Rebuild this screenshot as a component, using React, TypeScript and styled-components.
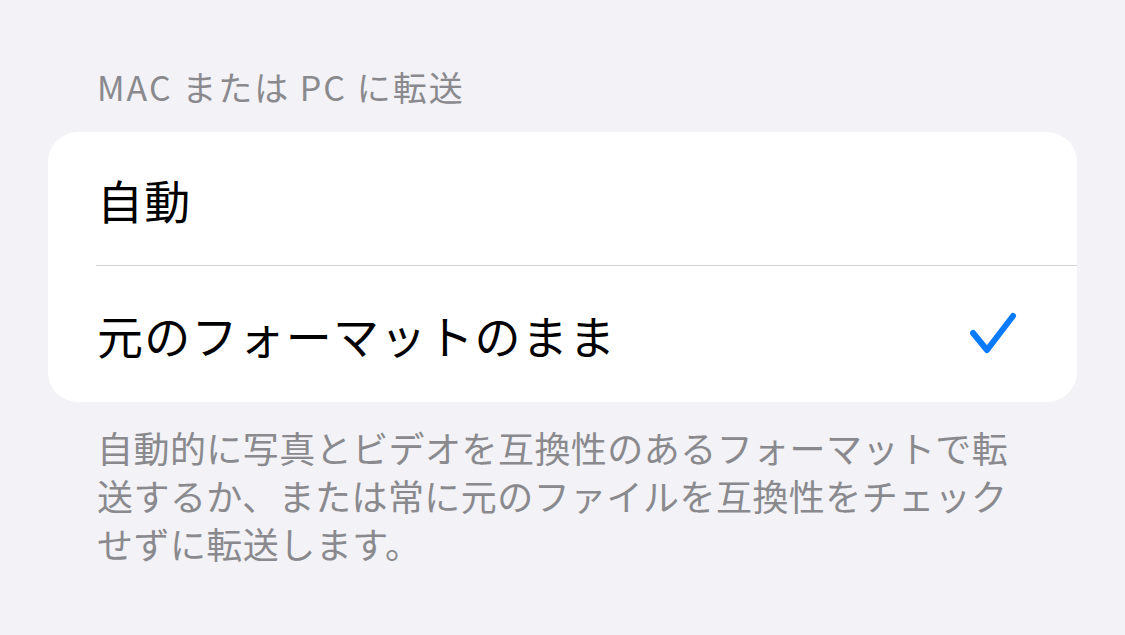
import React from "react";
import styled, { createGlobalStyle } from "styled-components";

const GlobalStyle = createGlobalStyle`
  html, body {
    margin: 0;
    padding: 0;
    background: #f2f2f7;
  }
  body {
    font-family: "Noto Sans CJK JP", "Noto Sans", sans-serif;
    -webkit-font-smoothing: antialiased;
  }
`;

const Page = styled.div`
  min-height: 635px;
  box-sizing: border-box;
  padding: 67px 48px 0;
  background: #f2f2f7;
`;

const SectionHeader = styled.div`
  padding-left: 49px;
  font-size: 34px;
  line-height: 40px;
  letter-spacing: 2px;
  color: #8a8a8e;
  margin-bottom: 25px;
`;

const Card = styled.div`
  background: #ffffff;
  border-radius: 30px;
  overflow: hidden;
`;

const Row = styled.div<{ $divider?: boolean }>`
  position: relative;
  display: flex;
  align-items: center;
  justify-content: space-between;
  height: ${(p) => (p.$divider ? "134px" : "136px")};
  padding: 0 58px 0 49px;
  box-sizing: border-box;
  ${(p) =>
    p.$divider &&
    `
    &::after {
      content: "";
      position: absolute;
      left: 48px;
      right: 0;
      bottom: 0;
      height: 1px;
      background: #d1d1d6;
    }
  `}
`;

const Label = styled.span`
  font-size: 46px;
  line-height: 56px;
  letter-spacing: 1.2px;
  color: #000000;
`;

const Footer = styled.p`
  margin: 21px 0 0;
  padding-left: 49px;
  max-width: 945px;
  font-size: 36px;
  line-height: 48px;
  letter-spacing: 0.45px;
  color: #8a8a8e;
`;

const Check = () => (
  <svg width="52" height="50" viewBox="0 0 52 50">
    <path
      d="M6 24 L20 41 L46 7"
      fill="none"
      stroke="#0a7aff"
      strokeWidth="6"
      strokeLinecap="round"
      strokeLinejoin="round"
    />
  </svg>
);

export default function App() {
  return (
    <Page>
      <GlobalStyle />
      <SectionHeader>MAC または PC に転送</SectionHeader>
      <Card>
        <Row $divider>
          <Label>自動</Label>
        </Row>
        <Row>
          <Label>元のフォーマットのまま</Label>
          <Check />
        </Row>
      </Card>
      <Footer>
        自動的に写真とビデオを互換性のあるフォーマットで転送するか、または常に元のファイルを互換性をチェックせずに転送します。
      </Footer>
    </Page>
  );
}
